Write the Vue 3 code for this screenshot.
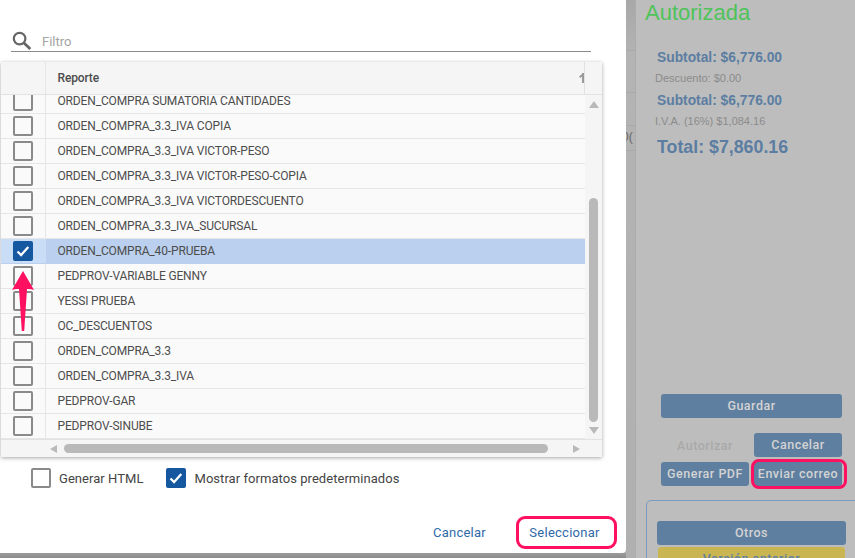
<script setup>
const rows = [
  { name: 'ORDEN_COMPRA SUMATORIA CANTIDADES' },
  { name: 'ORDEN_COMPRA_3.3_IVA COPIA' },
  { name: 'ORDEN_COMPRA_3.3_IVA VICTOR-PESO' },
  { name: 'ORDEN_COMPRA_3.3_IVA VICTOR-PESO-COPIA' },
  { name: 'ORDEN_COMPRA_3.3_IVA VICTORDESCUENTO' },
  { name: 'ORDEN_COMPRA_3.3_IVA_SUCURSAL' },
  { name: 'ORDEN_COMPRA_40-PRUEBA', selected: true },
  { name: 'PEDPROV-VARIABLE GENNY' },
  { name: 'YESSI PRUEBA' },
  { name: 'OC_DESCUENTOS' },
  { name: 'ORDEN_COMPRA_3.3' },
  { name: 'ORDEN_COMPRA_3.3_IVA' },
  { name: 'PEDPROV-GAR' },
  { name: 'PEDPROV-SINUBE' }
]
</script>

<template>
  <div class="page">
    <div class="backdrop">
      <div class="strip-top"></div>
      <div class="strip-line l1"></div>
      <div class="strip-line l2"></div>
      <div class="strip-line l3"></div>
      <span class="stray">0(</span>
    </div>

    <aside class="panel">
      <h1 class="status">Autorizada</h1>
      <div class="totals">
        <p class="strong">Subtotal: $6,776.00</p>
        <p class="soft">Descuento: $0.00</p>
        <p class="strong">Subtotal: $6,776.00</p>
        <p class="soft">I.V.A. (16%) $1,084.16</p>
        <p class="total">Total: $7,860.16</p>
      </div>
      <div class="actions">
        <button class="btn wide">Guardar</button>
        <div class="pair first">
          <span class="disabled">Autorizar</span>
          <button class="btn">Cancelar</button>
        </div>
        <div class="pair">
          <button class="btn">Generar PDF</button>
          <button class="btn ringed">Enviar correo</button>
        </div>
      </div>
      <div class="others">
        <button class="btn other">Otros</button>
        <button class="btn prev">Versión anterior</button>
      </div>
    </aside>

    <section class="modal">
      <div class="filter">
        <svg class="search" width="20" height="20" viewBox="0 0 20 20" fill="none" stroke="#666" stroke-width="2.2">
          <circle cx="7.6" cy="7.6" r="5.8" />
          <path d="M12 12l6.3 6" stroke-width="2.8" />
        </svg>
        <span class="filter-text">Filtro</span>
      </div>

      <div class="grid">
        <div class="grid-head">
          <div class="cell-check"></div>
          <div class="cell-name head-name">Reporte<span class="sort"></span></div>
          <div class="head-gap"></div>
        </div>
        <div class="grid-main">
          <div class="rows">
            <div v-for="r in rows" :key="r.name" class="row" :class="{ selected: r.selected }">
              <div class="cell-check">
                <span class="box" :class="{ on: r.selected }">
                  <svg v-if="r.selected" width="16" height="16" viewBox="0 0 16 16" fill="none" stroke="#fff" stroke-width="2.2">
                    <path d="M2.5 8.5l3.6 3.6 7.2-8" />
                  </svg>
                </span>
              </div>
              <div class="cell-name">{{ r.name }}</div>
            </div>
          </div>
          <div class="vbar">
            <i class="tri up"></i>
            <i class="vthumb"></i>
            <i class="tri down"></i>
          </div>
        </div>
        <div class="hbar">
          <i class="tri left"></i>
          <i class="hthumb"></i>
          <i class="tri right"></i>
        </div>
      </div>

      <div class="options">
        <label class="opt"><span class="box"></span>Generar HTML</label>
        <label class="opt">
          <span class="box on">
            <svg width="16" height="16" viewBox="0 0 16 16" fill="none" stroke="#fff" stroke-width="2.2">
              <path d="M2.5 8.5l3.6 3.6 7.2-8" />
            </svg>
          </span>Mostrar formatos predeterminados
        </label>
      </div>

      <div class="footer">
        <button class="link">Cancelar</button>
        <button class="link primary">Seleccionar</button>
      </div>

      <svg class="arrow" width="30" height="70" viewBox="0 0 30 70">
        <path d="M12 1L23 20Q19 18.5 16 19L13.2 61H10.8L8 19Q5 18.5 1 20Z" fill="#ff1060" />
      </svg>
    </section>
  </div>
</template>

<style>
html, body { margin: 0; background: #bdbdbd; }
</style>

<style scoped>
.page {
  position: relative;
  display: flex;
  width: 855px;
  height: 558px;
  overflow: hidden;
  background: #bdbdbd;
  font-family: Roboto, "Liberation Sans", sans-serif;
}
.backdrop {
  position: relative;
  flex: 0 0 636px;
  background: linear-gradient(#b4b4b4, #b0b0b0);
  border-right: 1px solid #acacac;
  box-sizing: border-box;
}
.backdrop::after {
  content: "";
  position: absolute;
  left: 0;
  width: 626px;
  bottom: 0;
  height: 5px;
  background: linear-gradient(#9b9b9b, #8c8c8c);
}
.strip-top {
  height: 50px;
  background: linear-gradient(#a8a8a8, #b2b2b2);
  border-bottom: 1px solid #a9a9a9;
}
.strip-line { height: 1px; background: #a9a9a9; }
.l1 { margin-top: 41px; }
.l2 { margin-top: 32px; }
.l3 { margin-top: 24px; }
.stray {
  position: absolute;
  left: 622px;
  top: 130px;
  font: 12px "Liberation Sans", sans-serif;
  color: #666;
}
.panel {
  flex: 1;
  min-width: 0;
  padding-left: 10px;
  background: #bdbdbd;
}
.status {
  margin: 0 0 0 -1px;
  padding-top: 0;
  height: 28px;
  font: 400 22px/25px "Liberation Sans", sans-serif;
  color: #4fc35a;
}
.totals {
  padding: 19px 0 0 10px;
  font-family: "Liberation Sans", sans-serif;
}
.totals p { margin: 0; }
.strong {
  height: 21px;
  font: 700 13.8px/21px "Liberation Sans", sans-serif;
  color: #5c7da2;
  padding-left: 1px;
}
.soft {
  height: 22px;
  font-size: 11px;
  line-height: 20px;
  color: #8b8b8b;
  margin-left: -1px !important;
}
.total {
  padding: 2px 0 0 1px;
  font-weight: 700;
  font-size: 17.8px;
  line-height: 24px;
  color: #5c7da2;
}
.actions {
  margin: 235px 0 0 15px;
  width: 181px;
}
.btn {
  display: block;
  box-sizing: border-box;
  width: 88px;
  height: 24px;
  padding: 0;
  border: 0;
  border-radius: 3px;
  background: #5f7fa0;
  color: #d3d3d3;
  font: 500 12.5px/24px Roboto, sans-serif;
  letter-spacing: 0.5px;
  text-align: center;
}
.wide { width: 181px; }
.pair {
  display: flex;
  justify-content: space-between;
  align-items: center;
  margin-top: 5px;
}
.pair.first { margin-top: 15px; }
.disabled {
  width: 88px;
  text-align: center;
  font: 500 12.5px Roboto, sans-serif;
  letter-spacing: 0.5px;
  color: #a9a9a9;
}
.ringed { position: relative; }
.ringed::after {
  content: "";
  position: absolute;
  left: -3px;
  right: -5px;
  top: -3px;
  bottom: -3px;
  border: 3px solid #ff1060;
  border-radius: 8px;
}
.others {
  box-sizing: border-box;
  margin-top: 14px;
  width: 230px;
  height: 70px;
  padding: 20px 0 0 10px;
  border: 1px solid #7a9ac4;
  border-radius: 5px;
}
.other { width: 189px; }
.prev {
  width: 187px;
  margin: 2px 0 0 1px;
  background: #c9b652;
  color: #5f7fa0;
}

.modal {
  position: absolute;
  left: 0;
  top: 0;
  display: flex;
  flex-direction: column;
  width: 626px;
  height: 553px;
  background: #fff;
  border-radius: 0 0 4px 0;
}
.filter {
  display: flex;
  align-items: center;
  box-sizing: border-box;
  height: 52px;
  margin: 0 35px 0 11px;
  padding-top: 31px;
  border-bottom: 1px solid #8a8a8a;
}
.search { flex: none; margin-left: 1px; }
.filter-text {
  margin-left: 10px;
  font-size: 13px;
  color: #a4a4a4;
}
.grid {
  display: flex;
  flex-direction: column;
  box-sizing: border-box;
  width: 601px;
  height: 395px;
  margin: 10px 0 0 1px;
  background: #f7f7f7;
  box-shadow: 0 1px 4px rgba(0, 0, 0, 0.35);
  overflow: hidden;
}
.grid-head {
  display: flex;
  flex: none;
  height: 33px;
  background: #f5f5f5;
  border-bottom: 1px solid #e2e2e2;
  box-sizing: border-box;
}
.grid-head .cell-check, .grid-head .cell-name { height: 32px; }
.cell-check {
  display: flex;
  flex: none;
  align-items: center;
  justify-content: center;
  box-sizing: border-box;
  width: 45px;
  border-right: 1px solid #e6e6e6;
}
.cell-name {
  flex: 1;
  min-width: 0;
  padding-left: 11.5px;
  font-size: 12px;
  color: #4d4d4d;
  white-space: nowrap;
  letter-spacing: -0.15px;
}
.head-name {
  position: relative;
  line-height: 32px;
  font-weight: 500;
  border-right: 1px solid #e2e2e2;
}
.sort {
  position: absolute;
  right: 0;
  top: 11px;
  width: 5px;
  height: 11px;
  overflow: hidden;
}
.sort::before {
  content: "";
  position: absolute;
  left: 3px;
  top: 0;
  width: 2px;
  height: 10px;
  background: #9a9a9a;
}
.sort::after {
  content: "";
  position: absolute;
  left: 0;
  top: 2px;
  width: 4px;
  height: 1.5px;
  background: #9a9a9a;
  transform: rotate(-40deg);
}
.head-gap { flex: 0 0 17px; }
.grid-main {
  display: flex;
  flex: none;
  height: 344px;
  overflow: hidden;
}
.rows {
  flex: 0 0 584px;
  width: 584px;
  background: #fafafa;
  overflow: hidden;
}
.row {
  display: flex;
  align-items: stretch;
  box-sizing: border-box;
  height: 25px;
  border-bottom: 1px solid #e6e6e6;
  background: #fafafa;
}
.row:first-child { margin-top: -6px; }
.row .cell-name { line-height: 24px; }
.row.selected { background: #bad0ee; border-bottom-color: #bad0ee; }
.row.selected .cell-check { background: #c9ddf6; border-right-color: #c9ddf6; }
.box {
  display: inline-flex;
  flex: none;
  align-items: center;
  justify-content: center;
  box-sizing: border-box;
  width: 20px;
  height: 20px;
  border: 2px solid #8a8a8a;
  border-radius: 2px;
  background: #fff;
}
.row .box { background: transparent; }
.box.on, .row .box.on { background: #1558a0; border-color: #1558a0; }
.vbar {
  display: flex;
  flex: 1;
  flex-direction: column;
  align-items: center;
  box-sizing: border-box;
  padding-top: 6px;
  background: #f5f5f5;
}
.tri {
  display: block;
  width: 0;
  height: 0;
  border-style: solid;
  border-color: transparent;
}
.tri.up { border-width: 0 5px 7px; border-bottom-color: #b9b9b9; }
.tri.down { margin-top: 5px; border-width: 7px 5px 0; border-top-color: #b9b9b9; }
.vthumb {
  display: block;
  width: 9px;
  height: 224px;
  margin-top: 90px;
  border-radius: 5px;
  background: #b9b9b9;
}
.hbar {
  display: flex;
  flex: none;
  align-items: center;
  height: 18px;
  padding-left: 49px;
  background: #f5f5f5;
  border-top: 1px solid #e2e2e2;
  box-sizing: border-box;
}
.tri.left { border-width: 4.5px 7px 4.5px 0; border-right-color: #b9b9b9; }
.tri.right { margin-left: 25px; border-width: 4.5px 0 4.5px 7px; border-left-color: #b9b9b9; }
.hthumb {
  display: block;
  width: 484px;
  height: 9px;
  margin-left: 7px;
  border-radius: 5px;
  background: #b9b9b9;
}
.options {
  display: flex;
  gap: 23px;
  margin: 11px 0 0 31px;
}
.opt {
  display: flex;
  align-items: center;
  gap: 8px;
  font-size: 13px;
  letter-spacing: 0.05px;
  color: #444;
}
.footer {
  display: flex;
  justify-content: flex-end;
  align-items: center;
  gap: 30px;
  margin: 28px 9px 0 0;
}
.link {
  height: 33px;
  padding: 0;
  border: 0;
  background: none;
  color: #2f6aa8;
  font: 400 13px Roboto, sans-serif;
  letter-spacing: 0.25px;
}
.primary {
  box-sizing: border-box;
  width: 101px;
  padding-right: 4px;
  border: 3px solid #ff1060;
  border-radius: 9px;
}
.arrow {
  position: absolute;
  left: 11px;
  top: 270px;
}
</style>
